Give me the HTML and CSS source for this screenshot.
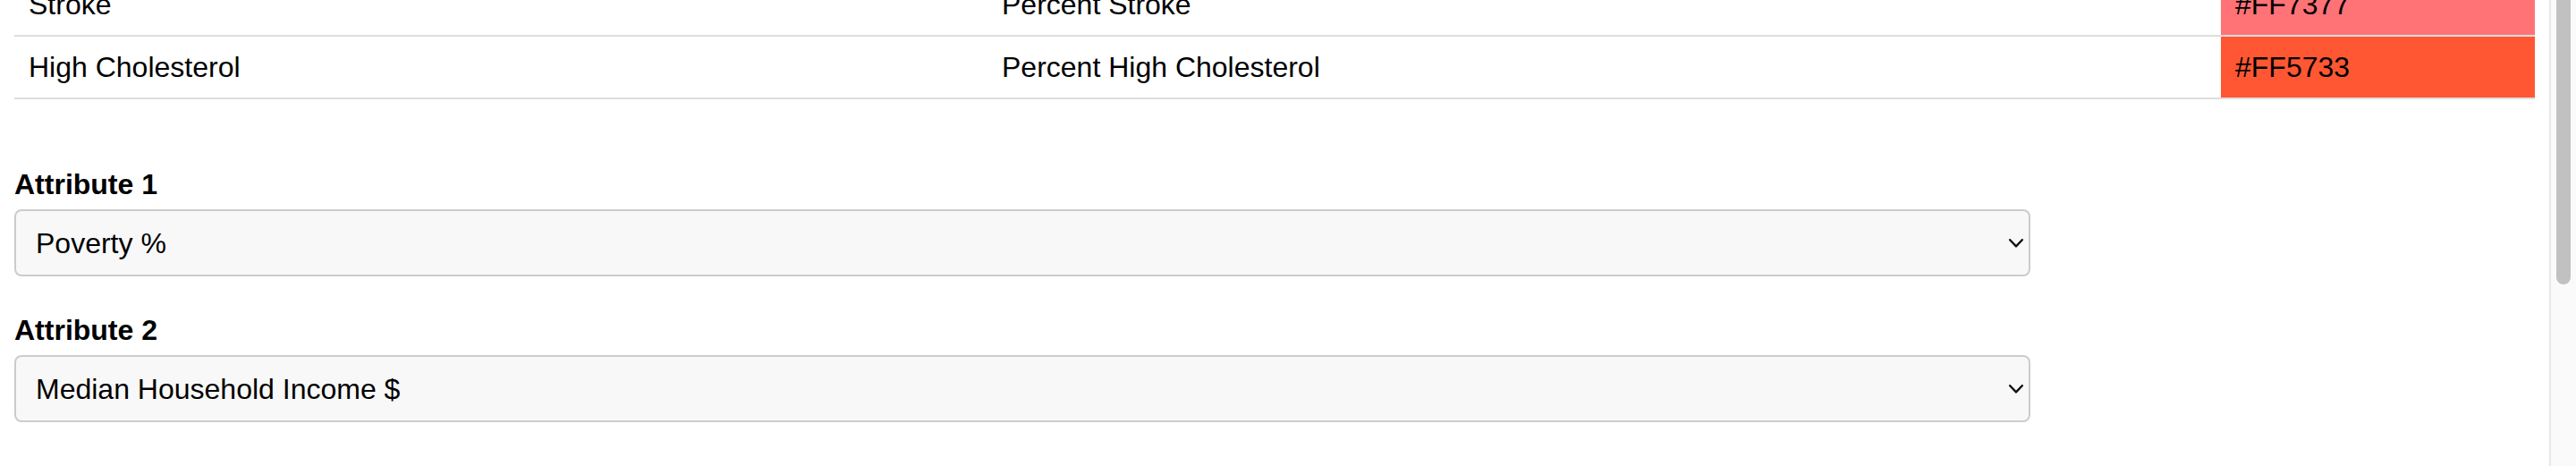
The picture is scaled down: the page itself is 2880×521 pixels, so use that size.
FILE: index.html
```html
<!DOCTYPE html>
<html lang="en">
<head>
<meta charset="utf-8">
<title>Attributes</title>
<link rel="stylesheet" href="styles.css">
</head>
<body>
<div class="page">
  <main class="content">
    <table class="legend">
      <colgroup>
        <col class="col-name">
        <col class="col-field">
        <col class="col-color">
      </colgroup>
      <tbody>
        <tr>
          <td>Stroke</td>
          <td>Percent Stroke</td>
          <td class="swatch" style="background-color:#FF7377">#FF7377</td>
        </tr>
        <tr>
          <td>High Cholesterol</td>
          <td>Percent High Cholesterol</td>
          <td class="swatch" style="background-color:#FF5733">#FF5733</td>
        </tr>
      </tbody>
    </table>

    <div class="field">
      <label class="field-label" for="attr1">Attribute 1</label>
      <div class="select-wrap">
        <select id="attr1" class="select">
          <option>Poverty %</option>
        </select>
        <svg class="chevron" viewBox="0 0 16 10" aria-hidden="true"><path d="M1.2 1.2 L8 8.4 L14.8 1.2" fill="none" stroke="#111" stroke-width="2.4" stroke-linecap="round" stroke-linejoin="round"/></svg>
      </div>
    </div>

    <div class="field">
      <label class="field-label" for="attr2">Attribute 2</label>
      <div class="select-wrap">
        <select id="attr2" class="select">
          <option>Median Household Income $</option>
        </select>
        <svg class="chevron" viewBox="0 0 16 10" aria-hidden="true"><path d="M1.2 1.2 L8 8.4 L14.8 1.2" fill="none" stroke="#111" stroke-width="2.4" stroke-linecap="round" stroke-linejoin="round"/></svg>
      </div>
    </div>
  </main>
  <div class="scrollbar">
    <div class="scroll-thumb"></div>
  </div>
</div>
</body>
</html>
```

FILE: styles.css
```css
html, body {
  margin: 0;
  padding: 0;
  background: #ffffff;
}

body {
  font-family: "Liberation Sans", Arial, Helvetica, sans-serif;
  font-size: 32px;
  color: #000000;
  overflow: hidden;
}

.page {
  display: flex;
  height: 521px;
  overflow: hidden;
}

.content {
  flex: 1;
  min-width: 0;
  padding: 0 16px;
}

.legend {
  width: 100%;
  border-collapse: collapse;
  margin-top: -29px;
  margin-bottom: 77px;
  table-layout: fixed;
}

.col-name { width: 1088px; }
.col-field { width: 1379px; }
.col-color { width: 351px; }

.legend td {
  padding: 16px;
  line-height: 36px;
  border-bottom: 2px solid #dddddd;
  text-align: left;
  white-space: nowrap;
}

.field {
  margin-bottom: 42px;
}

.field-label {
  display: block;
  font-weight: bold;
  line-height: 36px;
  margin-bottom: 10px;
}

.select-wrap {
  position: relative;
  width: 80%;
}

.select {
  -webkit-appearance: none;
  appearance: none;
  display: block;
  width: 100%;
  height: 75px;
  box-sizing: border-box;
  padding: 0 22px;
  margin: 0;
  border: 2px solid #cccccc;
  border-radius: 8px;
  background: #f8f8f8;
  font-family: "Liberation Sans", Arial, Helvetica, sans-serif;
  font-size: 32px;
  color: #000000;
  outline: none;
}

.chevron {
  position: absolute;
  right: 8px;
  top: 33px;
  width: 16px;
  height: 10px;
  pointer-events: none;
}

.scrollbar {
  width: 28px;
  flex: none;
  background: #fafafa;
  border-left: 2px solid #e8e8e8;
  display: flex;
  justify-content: center;
}

.scroll-thumb {
  width: 16px;
  height: 318px;
  background: #c1c1c1;
  border-radius: 0 0 8px 8px;
}
```
